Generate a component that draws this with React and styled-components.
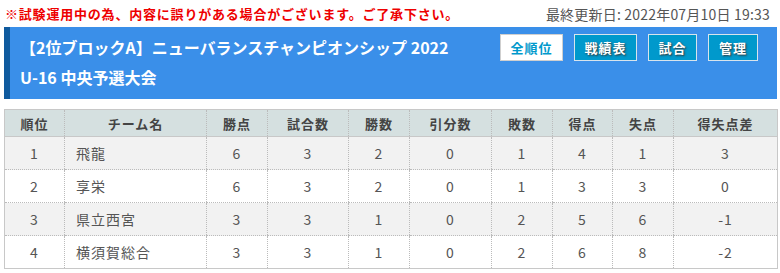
import React from "react";
import styled, { createGlobalStyle } from "styled-components";

const Global = createGlobalStyle`
  html, body { margin: 0; padding: 0; background: #fff; }
  body { font-family: "Noto Sans CJK JP", "Noto Sans", sans-serif; }
`;

const Page = styled.div`
  padding: 0 3px 0 4px;
  width: 780px;
  box-sizing: border-box;
`;

const TopBar = styled.div`
  display: flex;
  justify-content: space-between;
  align-items: center;
  height: 27px;
  padding: 0 7px 0 1px;
`;

const Notice = styled.div`
  color: #ee0000;
  font-weight: bold;
  font-size: 13px;
  letter-spacing: 0.8px;
  line-height: 1;
`;

const Updated = styled.div`
  color: #555;
  font-size: 14px;
  letter-spacing: 0.2px;
  line-height: 1;
`;

const Band = styled.div`
  display: flex;
  justify-content: space-between;
  align-items: flex-start;
  background: #3a8fe9;
  border-left: 6px solid #0f5a9e;
  padding: 5px 19px 7px 10px;
  height: 72px;
  box-sizing: border-box;
`;

const Title = styled.h1`
  margin: 0;
  color: #fff;
  font-size: 16px;
  font-weight: bold;
  line-height: 30px;
`;

const Buttons = styled.div`
  display: flex;
  gap: 11px;
  margin-top: 2px;
`;

const Btn = styled.button`
  font-family: inherit;
  height: 27px;
  padding: 0;
  width: ${(p) => p.$w}px;
  font-size: 13px;
  font-weight: bold;
  border: 1px solid ${(p) => (p.$active ? "#cfcfcf" : "#d8e4ec")};
  background: ${(p) => (p.$active ? "#fff" : "#0099cc")};
  color: ${(p) => (p.$active ? "#0099cc" : "#fff")};
  text-shadow: ${(p) => (p.$active ? "none" : "1px 1px 2px #333")};
  letter-spacing: 1px;
  cursor: pointer;
`;

const Table = styled.table`
  margin-top: 10px;
  width: 100%;
  border-collapse: collapse;
  table-layout: fixed;
  border: 1px solid #c8c8c8;
`;

const Th = styled.th`
  background: #d5e0e0;
  color: #444;
  font-size: 13px;
  font-weight: bold;
  height: 26px;
  padding: 0;
  text-align: center;
  border-left: 1px dotted #bbb;
  border-bottom: 1px solid #c8c8c8;
  letter-spacing: 1px;
  &:first-child { border-left: none; }
`;

const Tr = styled.tr`
  background: ${(p) => (p.$odd ? "#f2f2f2" : "#fff")};
`;

const Td = styled.td`
  height: 32px;
  padding: 0;
  color: #555;
  font-size: 14px;
  text-align: ${(p) => (p.$left ? "left" : "center")};
  padding-left: ${(p) => (p.$left ? "11px" : "0")};
  border-left: 1px dotted #bbb;
  border-bottom: 1px dotted #bbb;
  letter-spacing: 1px;
  &:first-child { border-left: none; }
`;

const widths = [60, 142, 61, 81, 61, 82, 61, 60, 61, 104];
const heads = ["順位", "チーム名", "勝点", "試合数", "勝数", "引分数", "敗数", "得点", "失点", "得失点差"];
const rows = [
  ["1", "飛龍", 6, 3, 2, 0, 1, 4, 1, 3],
  ["2", "享栄", 6, 3, 2, 0, 1, 3, 3, 0],
  ["3", "県立西宮", 3, 3, 1, 0, 2, 5, 6, -1],
  ["4", "横須賀総合", 3, 3, 1, 0, 2, 6, 8, -2],
];

export default function App() {
  return (
    <Page>
      <Global />
      <TopBar>
        <Notice>※試験運用中の為、内容に誤りがある場合がございます。ご了承下さい。</Notice>
        <Updated>最終更新日: 2022年07月10日 19:33</Updated>
      </TopBar>
      <Band>
        <Title>
          【2位ブロックA】ニューバランスチャンピオンシップ 2022
          <br />
          U-16 中央予選大会
        </Title>
        <Buttons>
          <Btn $active $w={63}>全順位</Btn>
          <Btn $w={63}>戦績表</Btn>
          <Btn $w={49}>試合</Btn>
          <Btn $w={50}>管理</Btn>
        </Buttons>
      </Band>
      <Table>
        <colgroup>
          {widths.map((w, i) => (
            <col key={i} style={{ width: w }} />
          ))}
        </colgroup>
        <thead>
          <tr>
            {heads.map((h) => (
              <Th key={h}>{h}</Th>
            ))}
          </tr>
        </thead>
        <tbody>
          {rows.map((r, i) => (
            <Tr key={i} $odd={i % 2 === 0}>
              {r.map((c, j) => (
                <Td key={j} $left={j === 1}>{c}</Td>
              ))}
            </Tr>
          ))}
        </tbody>
      </Table>
    </Page>
  );
}
